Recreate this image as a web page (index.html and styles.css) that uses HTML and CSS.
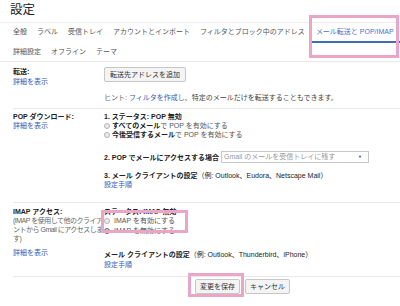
FILE: index.html
```html
<!DOCTYPE html>
<html>
	<head>
		<meta charset="UTF-8">
		<title>設定</title>
		<link rel="stylesheet" href="styles.css">
	</head>
	<body>
		<div class="page">
			<h1 class="title">設定</h1>
			<div class="tabs">
				<div class="tabrow">
					<span class="tab">全般</span>
					<span class="tab">ラベル</span>
					<span class="tab">受信トレイ</span>
					<span class="tab">アカウントとインポート</span>
					<span class="tab">フィルタとブロック中のアドレス</span>
					<span class="tab active">メール転送と POP/IMAP</span>
				</div>
				<div class="tabrow">
					<span class="tab">詳細設定</span>
					<span class="tab">オフライン</span>
					<span class="tab">テーマ</span>
				</div>
			</div>

			<div class="section fwd">
				<div class="label">
					<b>転送:</b>
					<a class="link">詳細を表示</a>
				</div>
				<div class="content">
					<span class="btn">転送先アドレスを追加</span>
					<p class="hint"><span class="gray">ヒント: </span><a class="inline-link">フィルタを作成</a><span class="gray">し、</span>特定のメールだけを転送することもできます。</p>
				</div>
			</div>

			<div class="section pop">
				<div class="label">
					<b>POP ダウンロード:</b>
					<a class="link">詳細を表示</a>
				</div>
				<div class="content">
					<b>1. ステータス: POP 無効</b>
					<label class="radio"><span class="dot"></span><span><b>すべてのメール</b>で POP を有効にする</span></label>
					<label class="radio"><span class="dot"></span><span><b>今後受信するメール</b>で POP を有効にする</span></label>
					<div class="access">
						<b>2. POP でメールにアクセスする場合</b>
						<span class="select">Gmail のメールを受信トレイに残す<i class="arrow">▼</i></span>
					</div>
					<p class="client"><b>3. メール クライアントの設定</b>（例: Outlook、Eudora、Netscape Mail）</p>
					<a class="link">設定手順</a>
				</div>
			</div>

			<div class="section imap">
				<div class="label">
					<b>IMAP アクセス:</b>
					<p class="desc">(IMAP を使用して他のクライアントから Gmail にアクセスします)</p>
					<a class="link more">詳細を表示</a>
				</div>
				<div class="content">
					<b>ステータス: IMAP 無効</b>
					<label class="radio big"><span class="dot"></span><span>IMAP を有効にする</span></label>
					<label class="radio big"><span class="dot on"></span><span>IMAP を無効にする</span></label>
					<p class="client2"><b>メール クライアントの設定</b>（例: Outlook、Thunderbird、iPhone）</p>
					<a class="link">設定手順</a>
				</div>
			</div>

			<div class="actions">
				<span class="btn">変更を保存</span>
				<span class="btn">キャンセル</span>
			</div>

			<div class="mark mark-tab"></div>
			<div class="mark mark-imap"></div>
			<div class="mark mark-save"></div>
		</div>
	</body>
</html>
```

FILE: styles.css
```css
*{
	padding: 0;
	margin: 0;
}
body{
	font-family: "Liberation Sans", "Noto Sans CJK JP", sans-serif;
	font-size: 7px;
	line-height: 9px;
	color: #222;
	background: #fff;
	width: 400px;
	height: 306px;
	overflow: hidden;
}
.page{
	position: relative;
	height: 306px;
}
b{
	font-weight: bold;
}
.title{
	font-size: 12.5px;
	font-weight: normal;
	line-height: 16px;
	padding: 2px 10px 4px;
	color: #222;
	border-bottom: 1px solid #eee;
}
.tabs{
	padding-left: 13px;
	border-bottom: 1px solid #e8e8e8;
}
.tabrow{
	display: flex;
	gap: 10px;
}
.tab{
	line-height: 18px;
	border-bottom: 2px solid transparent;
	color: #555;
	white-space: nowrap;
}
.tabrow + .tabrow .tab{
	border-bottom: 0;
}
.tab.active{
	flex: 1;
	margin-left: -4px;
	padding-left: 5px;
	color: #3f74cc;
	border-bottom-color: #3d6db3;
}
.link{
	display: block;
	color: #2f62b8;
}
.inline-link{
	color: #2f62b8;
}
.gray{
	color: #666;
}
.section{
	display: flex;
	margin-left: 13px;
	border-top: 1px solid #e8e8e8;
}
.label{
	width: 91px;
	flex: none;
}
.content{
	flex: 1;
	display: flex;
	flex-direction: column;
	align-items: flex-start;
}
.btn{
	display: inline-block;
	height: 13px;
	line-height: 13px;
	padding: 0 4px;
	border: 1px solid #c6c6c6;
	border-radius: 2px;
	background: #f4f4f4;
	color: #333;
	white-space: nowrap;
}

/* forwarding */
.section.fwd{
	border-top: 0;
	padding: 5px 0 5px;
}
.fwd .label{
	line-height: 10px;
}
.fwd .btn{
	padding: 0 5px;
}
.hint{
	margin-top: 11px;
	line-height: 10px;
	color: #444;
	white-space: nowrap;
}

/* pop */
.section.pop{
	padding: 3px 0 13px;
}
.radio{
	display: flex;
	align-items: center;
	gap: 2px;
	color: #555;
}
.radio b{
	color: #222;
}
.dot{
	width: 4px;
	height: 4px;
	border: 1px solid #b5b5b5;
	border-radius: 50%;
	background: #ececec;
}
.dot.on{
	background: #444;
	border-color: #777;
	box-shadow: inset 0 0 0 1px #ececec;
}
.access{
	display: flex;
	align-items: center;
	gap: 2px;
	margin-top: 12px;
	height: 12px;
}
.select{
	position: relative;
	width: 144px;
	height: 10px;
	line-height: 10px;
	padding-left: 2px;
	border: 1px solid #c8c8c8;
	color: #999;
}
.arrow{
	position: absolute;
	right: 6px;
	top: 0;
	font-style: normal;
	font-size: 4px;
	color: #444;
}
.client{
	margin-top: 8px;
}

/* imap */
.section.imap{
	padding: 4px 0 6px;
}
.desc{
	color: #666;
	width: 93px;
	letter-spacing: -0.5px;
}
.more{
	margin-top: 5px;
}
.radio.big{
	line-height: 10px;
	gap: 4px;
}
.client2{
	margin-top: 14px;
	line-height: 10px;
}
.imap .content .link{
	line-height: 10px;
}

/* buttons */
.actions{
	display: flex;
	gap: 5px;
	margin-left: 13px;
	padding: 2px 0 0 182px;
	border-top: 1px solid #e8e8e8;
}

/* pink highlight boxes */
.mark{
	position: absolute;
	border: 3px solid #eba6c7;
}
.mark-tab{
	left: 309px;
	top: 15px;
	width: 84px;
	height: 37px;
}
.mark-imap{
	left: 101px;
	top: 210px;
	width: 81px;
	height: 17px;
}
.mark-save{
	left: 188px;
	top: 273px;
	width: 50px;
	height: 18px;
}
```
